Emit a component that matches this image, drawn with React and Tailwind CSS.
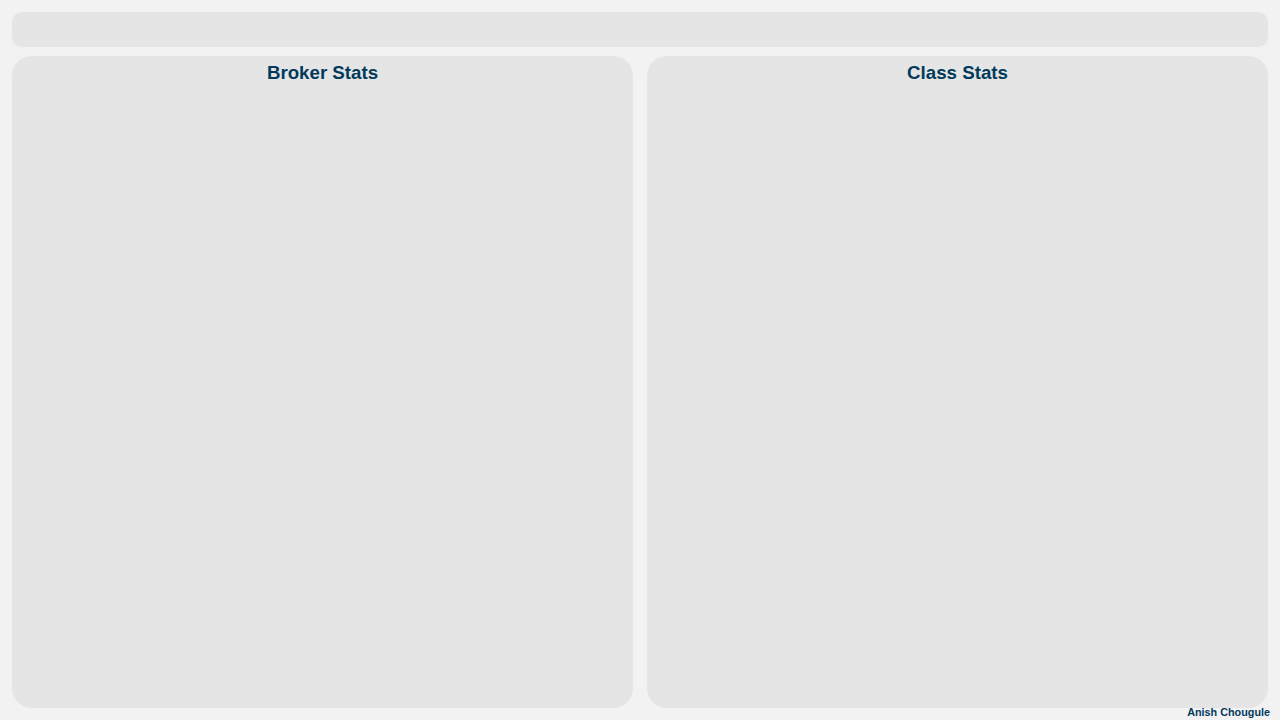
import React from 'react';

const Panel = ({ title }) => (
  <div className="flex-1 bg-[#e5e5e5] rounded-[20px] pt-[3px] flex flex-col">
    <h2 className="text-center text-[18.72px] leading-[28px] font-bold text-[#023a5c]">{title}</h2>
  </div>
);

export default function App() {
  return (
    <div className="relative h-[720px] w-full bg-[#f2f2f2] p-3 flex flex-col gap-[9px] font-['Liberation_Sans',Arial,sans-serif]">
      {/* top bar */}
      <div className="h-[35px] bg-[#e5e5e5] rounded-[10px]" />

      <div className="flex-1 flex gap-[14px]">
        <Panel title="Broker Stats" />
        <Panel title="Class Stats" />
      </div>

      <span className="absolute right-[10px] bottom-0 text-[10.8px] font-bold text-[#023a5c]">
        Anish Chougule
      </span>
    </div>
  );
}
